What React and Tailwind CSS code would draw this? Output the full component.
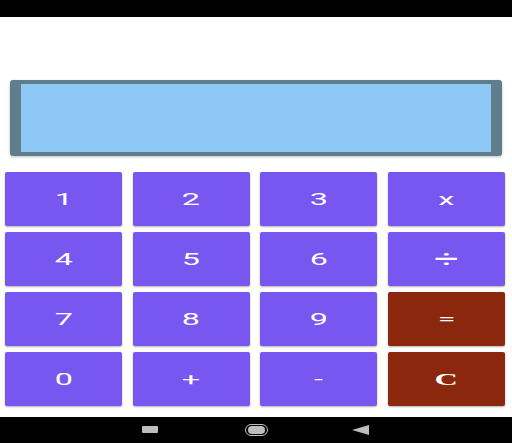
import React from 'react';

const keys = [
  { label: '1' }, { label: '2' }, { label: '3' }, { label: 'x' },
  { label: '4' }, { label: '5' }, { label: '6' }, { label: '÷', big: true },
  { label: '7' }, { label: '8' }, { label: '9' }, { label: '=', danger: true },
  { label: '0' }, { label: '+' }, { label: '-' }, { label: 'C', danger: true, serif: true },
];

function Key({ k }) {
  return (
    <button
      className={`rounded-[2px] shadow-[0_1px_2px_rgba(0,0,0,0.3)] flex items-center justify-center text-white ${
        k.danger ? 'bg-[#8a270c]' : 'bg-[#7857f0]'
      }`}
    >
      <span
        className={`inline-block scale-x-[1.9] leading-none ${
          k.serif
            ? "font-['Liberation_Serif',serif] font-bold text-[17px]"
            : k.big
            ? "font-['Roboto',sans-serif] font-normal text-[23px]"
            : "font-['Roboto',sans-serif] font-normal text-[17px]"
        }`}
      >
        {k.label}
      </span>
    </button>
  );
}

export default function App() {
  return (
    <div className="w-[512px] h-[443px] flex flex-col bg-white overflow-hidden">
      {/* Status bar */}
      <div className="h-[17px] bg-black" />

      {/* Calculator */}
      <div className="flex-1 flex flex-col">
        <div className="mt-[63px] mx-[10px] h-[76px] bg-[#607d8b] rounded-[3px] px-[11px] py-[4px] shadow-[0_1px_3px_rgba(0,0,0,0.25)]">
          <div className="w-full h-full bg-[#8ec8f5]" />
        </div>

        <div className="mt-[16px] pl-[5px] pr-[7px] grid grid-cols-4 gap-x-[10.67px] gap-y-[6px] auto-rows-[54px]">
          {keys.map(k => (
            <Key key={k.label} k={k} />
          ))}
        </div>
      </div>

      {/* Nav bar */}
      <div className="h-[26px] bg-black flex items-center relative">
        <div className="absolute left-[142px] top-[9px] w-[16px] h-[7px] bg-[#bdbdbd] rounded-[1px]" />
        <div className="absolute left-[245px] top-[7px] w-[23px] h-[12px] rounded-full border border-[#bdbdbd] flex items-center justify-center">
          <div className="w-[17px] h-[8px] rounded-full bg-[#bdbdbd]" />
        </div>
        <svg className="absolute left-[352px] top-[8px]" width="17" height="10" viewBox="0 0 17 10">
          <polygon points="0,5 17,0 17,10" fill="#bdbdbd" />
        </svg>
      </div>
    </div>
  );
}
